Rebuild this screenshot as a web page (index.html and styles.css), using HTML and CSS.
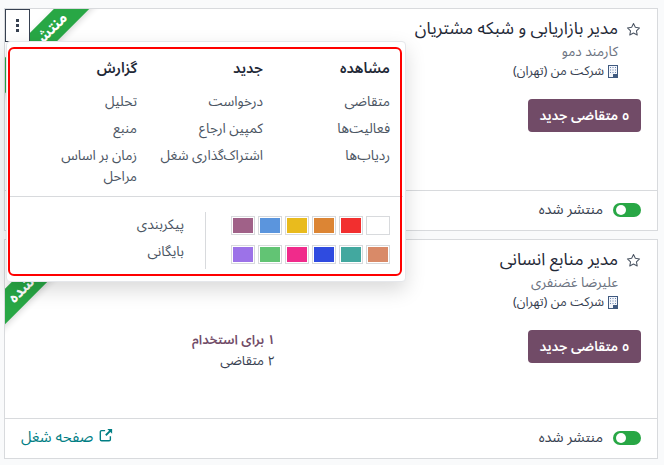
FILE: index.html
```html
<!DOCTYPE html>
<html lang="fa" dir="rtl">
<head>
<meta charset="utf-8">
<title>موقعیت‌های شغلی</title>
<link rel="stylesheet" href="styles.css">
</head>
<body>
<main class="board">
  <article class="card card-first">
    <div class="ribbon"><span>منتشر شده</span></div>
    <button class="kebab" aria-label="منو"><i></i><i></i><i></i></button>
    <div class="card-body">
      <div class="job-head">
        <svg class="star" viewBox="0 0 16 16"><path d="M8 1.6l1.95 4.1 4.5.6-3.3 3.1.85 4.5L8 11.7l-4 2.2.85-4.5-3.3-3.1 4.5-.6z"/></svg>
        <div class="job-info">
          <h2>مدیر بازاریابی و شبکه مشتریان</h2>
          <p class="person">کارمند دمو</p>
          <p class="company"><svg class="bld" viewBox="0 0 10 13"><rect x=".5" y=".5" width="9" height="12"/><path d="M2 2.5h1M4.500 2.500h1M7 2.500h1M2 5h1M4.500 5h1M7 5h1M2 7.500h1M4.500 7.500h1M7 7.500h1"/><rect class="door" x="5.500" y="9.500" width="3" height="2.500"/></svg><span>شرکت من (تهران)</span></p>
        </div>
      </div>
      <button class="cta">٥ متقاضی جدید</button>
    </div>
    <footer class="card-foot">
      <span class="toggle"></span><span class="pub">منتشر شده</span>
    </footer>
  </article>

  <article class="card card-second">
    <div class="ribbon"><span>منتشر شده</span></div>
    <div class="card-body">
      <div class="job-head">
        <svg class="star" viewBox="0 0 16 16"><path d="M8 1.6l1.95 4.1 4.5.6-3.3 3.1.85 4.5L8 11.7l-4 2.2.85-4.5-3.3-3.1 4.5-.6z"/></svg>
        <div class="job-info">
          <h2>مدیر منابع انسانی</h2>
          <p class="person">علیرضا غضنفری</p>
          <p class="company"><svg class="bld" viewBox="0 0 10 13"><rect x=".5" y=".5" width="9" height="12"/><path d="M2 2.5h1M4.500 2.500h1M7 2.500h1M2 5h1M4.500 5h1M7 5h1M2 7.500h1M4.500 7.500h1M7 7.500h1"/><rect class="door" x="5.500" y="9.500" width="3" height="2.500"/></svg><span>شرکت من (تهران)</span></p>
        </div>
      </div>
      <div class="cta-row">
        <button class="cta">٥ متقاضی جدید</button>
        <div class="stats">
          <strong>۱ برای استخدام</strong>
          <span>۲ متقاضی</span>
        </div>
      </div>
    </div>
    <footer class="card-foot">
      <span class="toggle"></span><span class="pub">منتشر شده</span>
      <a class="job-link" href="#"><svg viewBox="0 0 16 16"><path d="M7 3H3a1.500 1.500 0 0 0-1.500 1.500v8.500A1.500 1.500 0 0 0 3 14.500h8.500A1.500 1.500 0 0 0 13 13V9.500" class="o"/><path d="M9.500 1h5.500v5.500l-2-2-4.500 4.500-1.500-1.500 4.500-4.500z"/></svg><span>صفحه شغل</span></a>
    </footer>
  </article>
</main>

<section class="menu">
  <div class="menu-cols">
    <div class="col">
      <h3>مشاهده</h3>
      <a>متقاضی</a>
      <a>فعالیت‌ها</a>
      <a>ردیاب‌ها</a>
    </div>
    <div class="col">
      <h3>جدید</h3>
      <a>درخواست</a>
      <a>کمپین ارجاع</a>
      <a>اشتراک‌گذاری شغل</a>
    </div>
    <div class="col">
      <h3>گزارش</h3>
      <a>تحلیل</a>
      <a>منبع</a>
      <a>زمان بر اساس مراحل</a>
    </div>
  </div>
  <div class="menu-bottom">
    <div class="swatches">
      <i class="c0"></i><i class="c1"></i><i class="c2"></i><i class="c3"></i><i class="c4"></i><i class="c5"></i>
      <i class="c6"></i><i class="c7"></i><i class="c8"></i><i class="c9"></i><i class="c10"></i><i class="c11"></i>
    </div>
    <div class="menu-actions">
      <a>پیکربندی</a>
      <a>بایگانی</a>
    </div>
  </div>
  <div class="highlight"></div>
</section>
</body>
</html>
```
FILE: styles.css
```css
* { box-sizing: border-box; }
html, body { margin: 0; height: 465px; overflow: hidden; }
body {
  background: #f9fafb;
  font-family: "Noto Sans Arabic", "Noto Sans", "DejaVu Sans", sans-serif;
  font-size: 13px;
  color: #374151;
  position: relative;
}
h2, h3, p { margin: 0; font-weight: 400; }

.board {
  display: flex;
  flex-direction: column;
  gap: 8px;
  padding: 8px 6px 6px 4px;
  height: 465px;
}
.card {
  position: relative;
  background: #fff;
  border: 1px solid #d8dadd;
  display: flex;
  flex-direction: column;
  overflow: hidden;
}
.card-first { height: 223px; }
.card-second { height: 220px; }

.ribbon {
  position: absolute;
  top: 0;
  left: 0;
  width: 100px;
  height: 100px;
  overflow: hidden;
  pointer-events: none;
}
.ribbon span {
  position: absolute;
  left: -47px;
  top: 21px;
  width: 160px;
  height: 25px;
  line-height: 24px;
  text-align: center;
  background: #28a745;
  color: #fff;
  font-weight: 700;
  font-size: 15px;
  transform: rotate(-45deg);
  box-shadow: 0 2px 6px rgba(0,0,0,.15);
}
.kebab {
  position: absolute;
  left: 0;
  top: 0;
  width: 25px;
  height: 33px;
  padding: 0;
  background: #fff;
  border: 1px solid #374151;
  display: flex;
  flex-direction: column;
  align-items: center;
  justify-content: center;
  gap: 2px;
}
.kebab i { width: 3px; height: 3px; background: #374151; display: block; }

.card-body { flex: 1; padding: 9px 16px 0 16px; }
.job-head { display: flex; gap: 8px; }
.star { width: 15px; height: 15px; margin-top: 4px; flex: none; }
.star path { fill: none; stroke: #4b5563; stroke-width: 1.100; stroke-linejoin: round; }
.job-info h2 { font-size: 17.200px; line-height: 22px; color: #1f2937; }
.person { font-size: 13.500px; line-height: 20px; margin-top: 2px; color: #6b7280; }
.company { font-size: 12.800px; line-height: 20px; margin-top: -1px; display: flex; align-items: center; gap: 4px; color: #374151; }
.bld { width: 10px; height: 13px; flex: none; }
.bld rect { fill: #f4f6fb; stroke: #3f5a80; stroke-width: 1; }
.bld path { stroke: #6a86b0; stroke-width: 1; fill: none; }
.bld .door { fill: #3f5a80; }

.cta {
  display: block;
  margin-top: 18px;
  width: 113px;
  height: 33px;
  padding: 0;
  background: #714b67;
  color: #fff;
  border: 0;
  border-radius: 4px;
  font: 600 13.500px "Noto Sans Arabic", "Noto Sans", "DejaVu Sans", sans-serif;
}
.card-second .cta { margin-top: 0; }
.cta-row { display: flex; margin-top: 18px; gap: 253px; align-items: flex-start; }
.stats { display: flex; flex-direction: column; line-height: 21px; font-size: 13.200px; }
.stats strong { color: #714b67; font-weight: 600; font-size: 13px; }

.card-foot {
  height: 40px;
  flex: none;
  border-top: 1px solid #d8dadd;
  padding: 0 16px 2px;
  display: flex;
  align-items: center;
  gap: 10px;
}
.toggle {
  position: relative;
  width: 28px;
  height: 14px;
  border-radius: 7px;
  background: #28a745;
  flex: none;
}
.toggle::after {
  content: "";
  position: absolute;
  left: 3px;
  top: 2px;
  width: 10px;
  height: 10px;
  border-radius: 50%;
  background: #fff;
}
.pub { font-size: 14.400px; line-height: 20px; }
.job-link {
  margin-right: auto;
  margin-bottom: 2px;
  display: flex;
  align-items: center;
  gap: 6px;
  color: #017e84;
  text-decoration: none;
  font-size: 15px;
  line-height: 20px;
}
.job-link svg { width: 14px; height: 14px; flex: none; margin-bottom: 3px; }
.job-link path { fill: #017e84; }
.job-link path.o { fill: none; stroke: #017e84; stroke-width: 1.600; }

.menu {
  position: absolute;
  left: 6px;
  top: 41px;
  width: 400px;
  height: 241px;
  background: #fff;
  border: 1px solid #e5e7eb;
  border-radius: 4px;
  box-shadow: 0 8px 20px rgba(0,0,0,.15);
  z-index: 5;
}
.menu-cols {
  display: grid;
  grid-template-columns: 127px 126px 1fr;
  height: 155px;
  padding: 15px 13px 0 36px;
  border-bottom: 1px solid #d8dadd;
  margin: 0 2px;
}
.col h3 { font-size: 14.500px; font-weight: 600; line-height: 24px; color: #1f2937; margin-bottom: 10px; }
.col a { display: block; line-height: 21px; margin-bottom: 6px; color: #4b5563; font-size: 13.700px; }
.menu-bottom {
  display: flex;
  padding: 15px 15px 0 0;
}
.swatches {
  display: grid;
  grid-template-columns: repeat(6, 24px);
  gap: 10px 3px;
  direction: ltr;
  margin: 4px 0 0 25px;
  align-self: flex-start;
}
.swatches i {
  display: block;
  width: 24px;
  height: 19px;
  border: 1px solid #d8dadd;
  background-clip: content-box;
  padding: 1px;
}
.menu-actions {
  height: 57px;
  border-right: 1px solid #d8dadd;
  padding-right: 21px;
}
.menu-actions a { display: block; line-height: 25px; padding-bottom: 2px; color: #4b5563; font-size: 13.700px; }
.c0 { background-color: #a06188; }
.c1 { background-color: #5b95dd; }
.c2 { background-color: #e9bb1d; }
.c3 { background-color: #dc8534; }
.c4 { background-color: #f22f2f; }
.c5 { background-color: #fff; }
.c6 { background-color: #9c72e8; }
.c7 { background-color: #62c474; }
.c8 { background-color: #f02b8b; }
.c9 { background-color: #2f4be0; }
.c10 { background-color: #42a89f; }
.c11 { background-color: #d98a68; }
.highlight {
  position: absolute;
  left: 1px;
  top: 5px;
  width: 394px;
  height: 229px;
  border: 2px solid #f00;
  border-radius: 6px;
  pointer-events: none;
}
```
